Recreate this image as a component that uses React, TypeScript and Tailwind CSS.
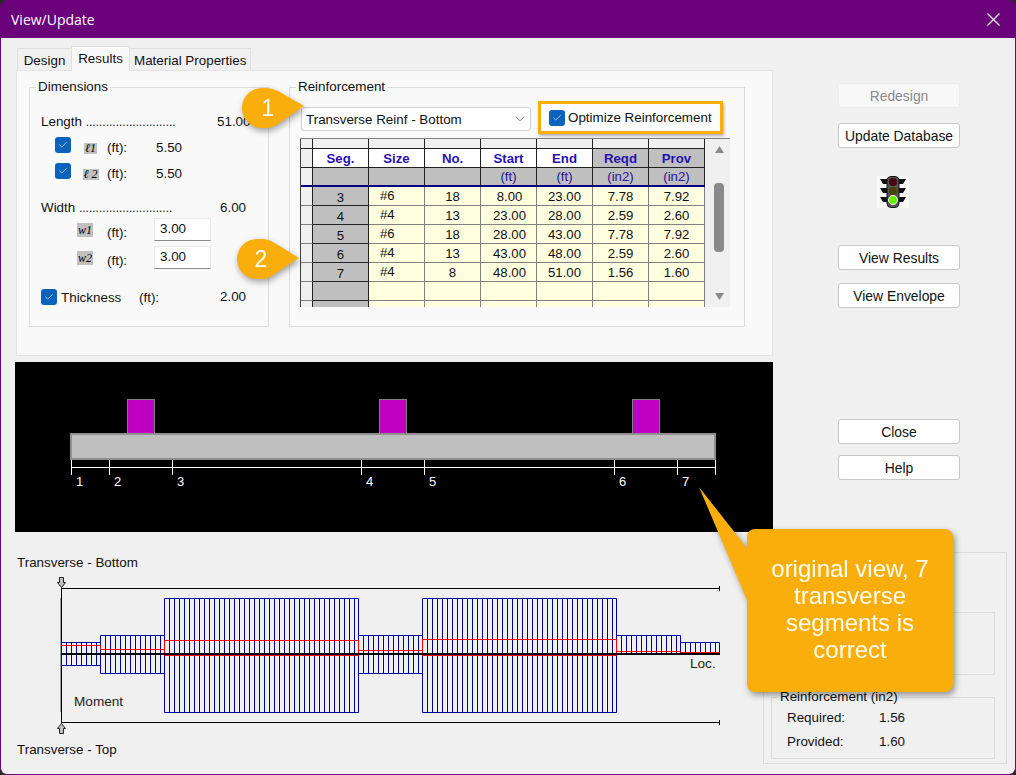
import type { ReactNode } from 'react';
import { Check, ChevronDown } from 'lucide-react';
import { twMerge } from 'tailwind-merge';

const ROWS = [
  ['3', '#6', '18', '8.00', '23.00', '7.78', '7.92'],
  ['4', '#4', '13', '23.00', '28.00', '2.59', '2.60'],
  ['5', '#6', '18', '28.00', '43.00', '7.78', '7.92'],
  ['6', '#4', '13', '43.00', '48.00', '2.59', '2.60'],
  ['7', '#4', '8', '48.00', '51.00', '1.56', '1.60'],
  ['', '', '', '', '', '', ''],
];

const HEADERS = ['Seg.', 'Size', 'No.', 'Start', 'End', 'Reqd', 'Prov'];
const UNITS = ['', '', '', '(ft)', '(ft)', '(in2)', '(in2)'];

const COLUMNS = [141, 393, 646];
const TICKS = [
  { x: 71.5, label: '1' },
  { x: 109.5, label: '2' },
  { x: 172.5, label: '3' },
  { x: 361.5, label: '4' },
  { x: 424.5, label: '5' },
  { x: 614.5, label: '6' },
  { x: 677.5, label: '7' },
  { x: 715.5, label: '' },
];

// moment diagram segments: x range, top and bottom of the blue bars
const SEGMENTS = [
  { x1: 61.5, x2: 100.5, top: 642.5, bottom: 665.5 },
  { x1: 100.5, x2: 164.5, top: 635.5, bottom: 673.5 },
  { x1: 164.5, x2: 358.5, top: 598.5, bottom: 712.5 },
  { x1: 358.5, x2: 422.5, top: 635.5, bottom: 673.5 },
  { x1: 422.5, x2: 616.5, top: 598.5, bottom: 712.5 },
  { x1: 616.5, x2: 680.5, top: 635.5, bottom: 654 },
  { x1: 680.5, x2: 719.5, top: 642.5, bottom: 654 },
];

const RED_LINE =
  '61,645.5 100.5,645.5 100.5,649.5 164.5,649.5 164.5,640.5 358.5,640.5 358.5,650.5 422.5,650.5 422.5,639.5 616.5,639.5 616.5,651.5 680.5,651.5 680.5,652.5 719.5,652.5';

function CheckBox({ className }: { className?: string }) {
  return (
    <span className={twMerge('flex h-[16px] w-[16px] shrink-0 items-center justify-center rounded-[3px] bg-[#0a62bd]', className)}>
      <Check size={10} strokeWidth={1.5} className="text-white" />
    </span>
  );
}

function Group({ title, className, children }: { title: string; className?: string; children?: ReactNode }) {
  return (
    <fieldset className={twMerge('border border-[#dcdcdc]', className)}>
      <legend className="ml-[6px] h-[16px] px-[2px] leading-[16px] text-[#111]">{title}</legend>
      {children}
    </fieldset>
  );
}

function SideButton({ label, disabled, className }: { label: string; disabled?: boolean; className?: string }) {
  return (
    <button
      type="button"
      disabled={disabled}
      className={twMerge(
        'block h-[25px] w-[122px] rounded-[3px] border border-[#c8c8c8] bg-white pt-[1px] text-center text-[13.9px] leading-[22px] text-[#111]',
        disabled && 'border-[#ececec] bg-[#f8f8f8] text-[#8a8a8a]',
        className
      )}
    >
      {label}
    </button>
  );
}

function ScriptLabel({ text }: { text: string }) {
  return (
    <span className="bg-[#c0c0c0] px-[1px] font-['Liberation_Serif',serif] text-[12px] leading-[11px] text-black italic">
      {text}
    </span>
  );
}

function ReinforcementGrid() {
  return (
    <div className="ml-[10px] flex h-[169px] w-[430px] overflow-hidden border-t border-[#808080] bg-[#f0f0f0]">
      <div className="grid h-fit w-[405px] shrink-0 grid-cols-[12px_repeat(7,56px)] border-l border-[#404040] text-center text-[13.2px] text-[#111]">
        <div className="h-[10px] border-r border-b border-[#222]" />
        {HEADERS.map((h) => (
          <div key={h} className="h-[10px] border-r border-b border-[#222]" />
        ))}

        <div className="h-[19px] border-r border-b border-[#222]" />
        {HEADERS.map((h, i) => (
          <div
            key={h}
            className={twMerge(
              'h-[19px] border-r border-b border-[#222] bg-white leading-[20px] font-bold text-[#2a10b0]',
              i > 4 && 'bg-[#bfbfbf]'
            )}
          >
            {h}
          </div>
        ))}

        <div className="h-[19px] border-r border-b-2 border-r-[#222] border-b-[#000080]" />
        {UNITS.map((u, i) => (
          <div
            key={i}
            className="h-[19px] border-r border-b-2 border-r-[#222] border-b-[#000080] bg-[#bfbfbf] leading-[18px] text-[#2a10a0]"
          >
            {u}
          </div>
        ))}

        {ROWS.map((row, r) => (
          <div key={r} className="contents">
            <div className="h-[19px] border-r border-b border-r-[#222] border-b-[#808080]" />
            {row.map((value, c) => (
              <div
                key={c}
                className={twMerge(
                  'h-[19px] border-r border-b border-[#808080] bg-[#ffffe0] leading-[19px]',
                  c === 0 && 'border-r-[#222] border-b-[#222] bg-[#bfbfbf] leading-[21px]',
                  c === 1 && 'pl-[11px] text-left leading-[17px]',
                  c === 3 && 'pl-[2px]'
                )}
              >
                {value}
              </div>
            ))}
          </div>
        ))}
        <div className="h-[19px] border-r border-r-[#222]" />
        <div className="h-[19px] border-r border-r-[#222] bg-[#bfbfbf]" />
        {[1, 2, 3, 4, 5, 6].map((n) => (
          <div key={n} className="h-[19px] border-r border-[#808080] bg-[#ffffe0]" />
        ))}
      </div>

      <div className="flex w-[25px] flex-col items-center pt-[7px] pl-[3px]">
        <svg width="9" height="7" viewBox="0 0 9 7">
          <path d="M4.5 0 L9 7 H0 Z" fill="#8a8a8a" />
        </svg>
        <div className="mt-[30px] h-[69px] w-[10px] rounded-[4px] bg-[#8a8a8a]" />
        <svg width="9" height="7" viewBox="0 0 9 7" className="mt-[41px]">
          <path d="M0 0 H9 L4.5 7 Z" fill="#8a8a8a" />
        </svg>
      </div>
    </div>
  );
}

function BeamView() {
  return (
    <svg width="758" height="170" viewBox="15 362 758 170" className="block bg-black">
      {COLUMNS.map((cx) => (
        <rect key={cx} x={cx - 13.5} y="399.5" width="27" height="34" fill="#c000c0" stroke="#808080" />
      ))}
      <rect x="70" y="433" width="646" height="27" fill="#8f8f8f" />
      <rect x="72" y="435" width="642" height="23" fill="#bfbfbf" />
      <line x1="71" y1="467.5" x2="716" y2="467.5" stroke="white" />
      {TICKS.map((t) => (
        <g key={t.x}>
          <line x1={t.x} y1="460" x2={t.x} y2="475" stroke="white" />
          <text x={t.x + 4.5} y="486" fill="white" fontSize="13">
            {t.label}
          </text>
        </g>
      ))}
    </svg>
  );
}

function MomentChart() {
  const hatch: number[][] = [];
  SEGMENTS.forEach((s) => {
    for (let x = s.x1; x <= s.x2; x += 5) hatch.push([x, s.top, s.bottom]);
  });

  return (
    <svg width="710" height="166" viewBox="17 572 710 166" className="block">
      <line x1="61" y1="588.5" x2="719.5" y2="588.5" stroke="black" />
      <line x1="61" y1="722.5" x2="719.5" y2="722.5" stroke="black" />
      <line x1="719.5" y1="586" x2="719.5" y2="591" stroke="black" />
      <line x1="719.5" y1="720" x2="719.5" y2="725" stroke="black" />
      <line x1="60.5" y1="598" x2="60.5" y2="712" stroke="#a0a0a0" />
      <line x1="61.5" y1="588" x2="61.5" y2="723" stroke="black" />
      <path d="M59.5 577.5 h4 v5 h2 l-4 5 l-4 -5 h2 Z" fill="#c0c0c0" stroke="#222" />
      <path d="M59.5 733.5 h4 v-5 h2 l-4 -5 l-4 5 h2 Z" fill="#c0c0c0" stroke="#222" />

      {hatch.map(([x, top, bottom]) => (
        <line key={`${x}-${top}`} x1={x} y1={top} x2={x} y2={bottom} stroke="#0000a0" />
      ))}
      {SEGMENTS.map((s) => (
        <g key={s.x1}>
          <line x1={s.x1} y1={s.top} x2={s.x2} y2={s.top} stroke="#0000a0" />
          <line x1={s.x1} y1={s.bottom} x2={s.x2} y2={s.bottom} stroke="#0000a0" />
          <line x1={s.x2} y1={s.top} x2={s.x2} y2={s.bottom} stroke="#0000a0" />
        </g>
      ))}

      <polyline points={RED_LINE} fill="none" stroke="#ff0000" />
      <path d="M164.5 640 V655.5 H358.5 V640 M422.5 639 V655.5 H616.5 V639" fill="none" stroke="#ff0000" />
      <rect x="61" y="653" width="659" height="2" fill="black" />

      <text x="74" y="706" fontSize="13.6" fill="#222">
        Moment
      </text>
      <text x="690" y="668" fontSize="13.6" fill="#222">
        Loc.
      </text>
    </svg>
  );
}

function TrafficLight() {
  return (
    <svg width="32" height="32" viewBox="0 0 32 32" className="ml-[39px] block bg-[#f8f8f8]">
      <path d="M3 3 h7 v5 h-4 Z M29 3 h-7 v5 h4 Z M3 12 h7 v5 h-4 Z M29 12 h-7 v5 h4 Z M3 21 h7 v5 h-4 Z M29 21 h-7 v5 h4 Z" fill="#111" />
      <rect x="10" y="0.5" width="12" height="31" rx="4" fill="#555" stroke="#111" />
      <circle cx="16" cy="6" r="4" fill="#4a0010" />
      <circle cx="16" cy="15" r="4" fill="#4a4000" />
      <circle cx="16" cy="24" r="4.5" fill="#60f000" stroke="white" />
    </svg>
  );
}

function Annotations() {
  return (
    <>
      <div className="absolute top-[88px] left-[242px] h-[40px] w-[62px] drop-shadow-[1px_3px_3px_rgba(0,0,0,0.35)]">
        <svg width="62" height="40" viewBox="0 0 62 40" className="block">
          <path d="M20 0 H24 Q30 0 36 3 L62 18 L36 36 Q30 40 24 40 H20 A20 20 0 0 1 20 0 Z" fill="#f9ae0b" />
        </svg>
        <span className="absolute top-0 left-[14px] w-[22px] pl-[2px] text-center text-[23px] leading-[41px] text-white">1</span>
      </div>
      <div className="absolute top-[239px] left-[237px] h-[40px] w-[62px] drop-shadow-[1px_3px_3px_rgba(0,0,0,0.35)]">
        <svg width="62" height="40" viewBox="0 0 62 40" className="block">
          <path d="M20 0 H26 Q31 0 36 3 L62 19 L36 36 Q31 40 26 40 H20 A20 20 0 0 1 20 0 Z" fill="#f9ae0b" />
        </svg>
        <span className="absolute top-0 left-[13px] w-[22px] text-center text-[23px] leading-[41px] text-white">2</span>
      </div>
      <div className="absolute top-[487px] left-[699px] h-[205px] w-[254px] drop-shadow-[2px_3px_3px_rgba(0,0,0,0.4)]">
        <svg width="254" height="205" viewBox="0 0 254 205" className="block">
          <path
            d="M56 42 H246 A8 8 0 0 1 254 50 V197 A8 8 0 0 1 246 205 H56 A8 8 0 0 1 48 197 V113 L0 0 L48 61 V50 A8 8 0 0 1 56 42 Z"
            fill="#f9ae0b"
          />
        </svg>
        <div className="absolute top-[68px] left-[48px] w-[206px] px-[14px] text-center text-[24px] leading-[27px] text-[#fffdf0]">
          original view, 7 transverse segments is correct
        </div>
      </div>
    </>
  );
}

export default function App() {
  return (
    <div className="bg-[#2a2a2a]">
      <div className="relative flex h-[775px] w-[1016px] flex-col overflow-hidden rounded-[8px] bg-[#6b007b] font-['Liberation_Sans',sans-serif] text-[13.4px] text-[#111]">
        <div className="flex h-[38px] shrink-0 items-center justify-between pr-[16px] pl-[11px]">
          <span className="font-['Open_Sans',sans-serif] text-[14px] text-white">View/Update</span>
          <svg width="13" height="13" viewBox="0 0 13 13">
            <path d="M0.5 0.5 L12.5 12.5 M12.5 0.5 L0.5 12.5" stroke="white" strokeWidth="1.1" />
          </svg>
        </div>

        <div className="flex flex-1 flex-col rounded-b-[7px] border-x border-b border-[#6b007b] bg-[#f0f0f0]">
          <div className="flex h-[494px]">
            <div className="w-[772px] pt-[8px] pl-[14px]">
              <div className="relative z-10 -mb-px ml-[2px] flex h-[25px] items-start">
                <div className="mt-[2px] h-[22px] w-[54px] border-t border-l border-[#e0e0e0] pt-[1px] text-center leading-[22px]">Design</div>
                <div className="h-[25px] w-[59px] border-x border-t border-[#e0e0e0] bg-[#f9f9f9] text-center leading-[23px]">Results</div>
                <div className="mt-[2px] h-[22px] w-[121px] whitespace-nowrap border-t border-r border-[#e0e0e0] pt-[1px] pl-[4px] leading-[22px]">Material Properties</div>
              </div>

              <div className="ml-[1px] flex h-[286px] w-[757px] gap-[20px] border border-[#e3e3e3] bg-[#f9f9f9] pt-[8px] pl-[12px]">
                <Group title="Dimensions" className="h-[248px] w-[240px]">
                  <div className="pt-[13px]">
                    <div className="flex h-[26px] items-center pt-[2px] pl-[11px]">
                      <span className="w-[176px]">Length <span className="text-[12px]">...........................</span></span>
                      <span>51.00</span>
                    </div>
                    <div className="flex h-[26px] items-center pt-[2px] pl-[25px]">
                      <CheckBox className="-translate-y-[3px]" />
                      <span className="flex w-[36px] justify-center pl-[3px]"><ScriptLabel text="ℓ1" /></span>
                      <span className="w-[49px]">(ft):</span>
                      <span>5.50</span>
                    </div>
                    <div className="flex h-[26px] items-center pt-[2px] pl-[25px]">
                      <CheckBox className="-translate-y-[3px]" />
                      <span className="flex w-[36px] justify-center pl-[3px]"><ScriptLabel text="ℓ 2" /></span>
                      <span className="w-[49px]">(ft):</span>
                      <span>5.50</span>
                    </div>

                    <div className="mt-[10px] flex h-[22px] items-center pt-[2px] pl-[11px]">
                      <span className="w-[179px]">Width <span className="text-[12px]">............................</span></span>
                      <span>6.00</span>
                    </div>
                    <div className="flex h-[23px] items-center pl-[47px]">
                      <span className="w-[30px] translate-y-[1px]"><ScriptLabel text="w1" /></span>
                      <span className="w-[47px] translate-y-[4px]">(ft):</span>
                      <input readOnly value="3.00" className="h-[23px] w-[57px] border border-[#e8e8e8] border-b-[#8a8a8a] bg-white pb-[2px] pl-[5px] outline-none" />
                    </div>
                    <div className="mt-[5px] flex h-[23px] items-center pl-[47px]">
                      <span className="w-[30px] translate-y-[1px]"><ScriptLabel text="w2" /></span>
                      <span className="w-[47px] translate-y-[4px]">(ft):</span>
                      <input readOnly value="3.00" className="h-[23px] w-[57px] border border-[#e8e8e8] border-b-[#8a8a8a] bg-white pb-[2px] pl-[5px] outline-none" />
                    </div>

                    <div className="mt-[17px] flex h-[22px] items-center pl-[11px]">
                      <CheckBox />
                      <span className="ml-[4px] w-[78px] translate-y-[1px]">Thickness</span>
                      <span className="w-[81px] translate-y-[1px]">(ft):</span>
                      <span>2.00</span>
                    </div>
                  </div>
                </Group>

                <Group title="Reinforcement" className="h-[248px] w-[456px]">
                  <div className="flex items-start pt-[6px] pl-[11px]">
                    <div className="mt-[6px] flex h-[24px] w-[230px] items-center justify-between rounded-[3px] border border-[#d0d0d0] bg-white pr-[3px] pl-[4px]">
                      <span className="translate-y-[1px]">Transverse Reinf - Bottom</span>
                      <ChevronDown size={14} strokeWidth={1} className="text-[#222]" />
                    </div>
                    <div className="ml-[7px] flex h-[33px] w-[185px] items-center border-[3px] border-[#f9ae0b] bg-[#fcfcfc] pl-[8px] shadow-[1px_2px_3px_rgba(0,0,0,0.3)]">
                      <CheckBox />
                      <span className="ml-[3px] translate-y-[1px] whitespace-nowrap">Optimize Reinforcement</span>
                    </div>
                  </div>
                  <div className="mt-[4px]">
                    <ReinforcementGrid />
                  </div>
                </Group>
              </div>

              <div className="mt-[6px]">
                <BeamView />
              </div>
            </div>

            <div className="ml-[65px] w-[122px] pt-[45px]">
              <SideButton label="Redesign" disabled />
              <SideButton label="Update Database" className="mt-[15px]" />
              <div className="mt-[28px]">
                <TrafficLight />
              </div>
              <SideButton label="View Results" className="mt-[37px]" />
              <SideButton label="View Envelope" className="mt-[13px]" />
              <SideButton label="Close" className="mt-[111px]" />
              <SideButton label="Help" className="mt-[11px]" />
            </div>
          </div>

          <div className="flex flex-1">
            <div className="w-[762px] pt-[23px] pl-[16px]">
              <div className="h-[16px] leading-[16px]">Transverse - Bottom</div>
              <div className="mt-[1px]">
                <MomentChart />
              </div>
              <div className="mt-[4px] h-[16px] leading-[16px]">Transverse - Top</div>
            </div>
            <div className="mt-[20px] h-[212px] w-[244px] border border-[#dcdcdc] pr-[11px] pl-[7px]">
              <div className="mt-[59px] h-[63px] border border-[#dcdcdc]" />
              <div className="mt-[14px]">
                <Group title="Reinforcement (in2)" className="h-[70px]">
                  <div className="grid grid-cols-[92px_1fr] pt-[1px] pl-[15px] leading-[24px]">
                    <span>Required:</span>
                    <span>1.56</span>
                    <span>Provided:</span>
                    <span>1.60</span>
                  </div>
                </Group>
              </div>
            </div>
          </div>
        </div>

        <Annotations />
      </div>
    </div>
  );
}
